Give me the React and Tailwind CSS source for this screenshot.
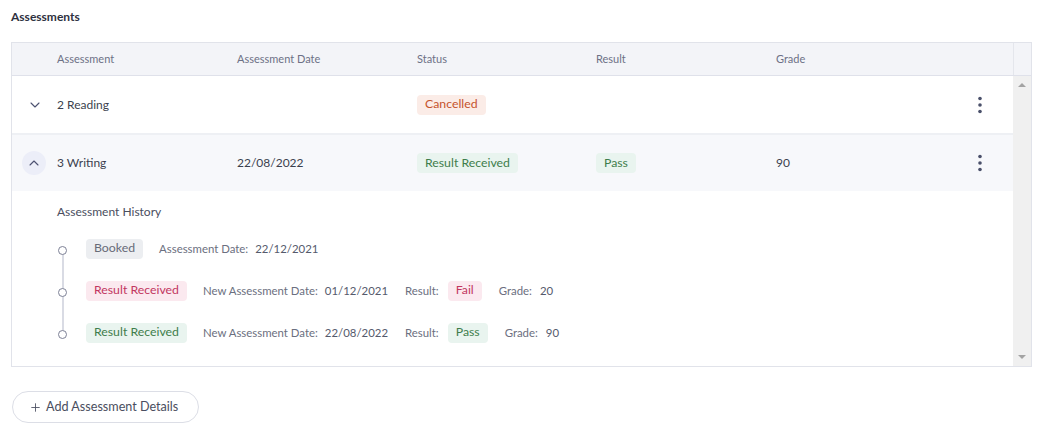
import { ChevronDown, ChevronUp, Plus } from 'lucide-react';

function Badge({ tone, children, className = '' }) {
  const tones = {
    red: 'bg-[#fbece7] text-[#c5532c]',
    green: 'bg-[#e9f4ef] text-[#3e7d4b]',
    pink: 'bg-[#fbe9ef] text-[#c2375f]',
    gray: 'bg-[#eceef1] text-[#676b78]',
  };
  return (
    <span className={`inline-flex items-center h-[20px] px-[8px] rounded-[4px] text-[12.3px] ${tones[tone]} ${className}`}>
      {children}
    </span>
  );
}

function Kebab() {
  return (
    <svg width="6" height="18" viewBox="0 0 6 18" className="text-[#4a506a]">
      <circle cx="3" cy="2.5" r="1.8" fill="currentColor" />
      <circle cx="3" cy="9" r="1.8" fill="currentColor" />
      <circle cx="3" cy="15.5" r="1.8" fill="currentColor" />
    </svg>
  );
}

function Dot() {
  return <span className="block w-[9px] h-[9px] rounded-full border-[1.5px] border-[#7d8196] bg-white" />;
}

function Label({ children }) {
  return <span className="text-[#6b6f80]">{children}</span>;
}

const history = [
  {
    badge: <Badge tone="gray">Booked</Badge>,
    body: (
      <>
        <Label>Assessment Date:</Label>
        <span className="ml-[7px] text-[#555a6c]">22/12/2021</span>
      </>
    ),
  },
  {
    badge: <Badge tone="pink">Result Received</Badge>,
    body: (
      <>
        <Label>New Assessment Date:</Label>
        <span className="ml-[7px] text-[#555a6c]">01/12/2021</span>
        <span className="ml-[17px]"><Label>Result:</Label></span>
        <Badge tone="pink" className="ml-[9px]">Fail</Badge>
        <span className="ml-[17px]"><Label>Grade:</Label></span>
        <span className="ml-[8px] text-[#555a6c]">20</span>
      </>
    ),
  },
  {
    badge: <Badge tone="green">Result Received</Badge>,
    body: (
      <>
        <Label>New Assessment Date:</Label>
        <span className="ml-[7px] text-[#555a6c]">22/08/2022</span>
        <span className="ml-[17px]"><Label>Result:</Label></span>
        <Badge tone="green" className="ml-[9px]">Pass</Badge>
        <span className="ml-[17px]"><Label>Grade:</Label></span>
        <span className="ml-[8px] text-[#555a6c]">90</span>
      </>
    ),
  },
];

export default function App() {
  return (
    <div className="w-[1043px] h-[433px] bg-white pl-[11px] pr-[11px] pt-[9px] font-['Lato',sans-serif] text-[#3b3f4e]">
      <h2 className="text-[12px] font-bold text-[#2e3140] leading-[16px]">Assessments</h2>

      {/* Table */}
      <div className="mt-[17px] w-[1021px] border border-[#e1e3ea] flex flex-col">
        {/* header */}
        <div className="flex h-[33px] bg-[#f3f4f8] border-b border-[#dfe1ea] text-[11px] text-[#6d7186]">
          <div className="flex-1 flex items-center pl-[45px]">
            <span className="w-[180px]">Assessment</span>
            <span className="w-[180px]">Assessment Date</span>
            <span className="w-[179px]">Status</span>
            <span className="w-[180px]">Result</span>
            <span className="w-[180px]">Grade</span>
          </div>
          <div className="w-[18px] border-l border-[#e4e6ec]" />
        </div>

        <div className="flex">
          <div className="flex-1 flex flex-col">
            {/* row 1 */}
            <div className="flex items-center h-[59px] bg-white border-b-2 border-[#eef0f4] text-[12px]">
              <div className="w-[45px] flex justify-center pl-[1px]">
                <ChevronDown size={16} strokeWidth={1.6} className="text-[#4c5170]" />
              </div>
              <span className="w-[180px]">2 Reading</span>
              <span className="w-[180px]" />
              <span className="w-[179px]"><Badge tone="red">Cancelled</Badge></span>
              <span className="w-[180px]" />
              <span className="w-[180px]" />
              <span className="ml-[21px]"><Kebab /></span>
            </div>

            {/* row 2 */}
            <div className="flex items-center h-[56px] bg-[#f7f8fb] text-[12px]">
              <div className="w-[45px] flex justify-center">
                <span className="w-[24px] h-[24px] -ml-[1px] rounded-full bg-[#eceef8] flex items-center justify-center">
                  <ChevronUp size={16} strokeWidth={1.6} className="text-[#4c5170]" />
                </span>
              </div>
              <span className="w-[180px]">3 Writing</span>
              <span className="w-[180px]">22/08/2022</span>
              <span className="w-[179px]"><Badge tone="green">Result Received</Badge></span>
              <span className="w-[180px]"><Badge tone="green">Pass</Badge></span>
              <span className="w-[180px]">90</span>
              <span className="ml-[21px]"><Kebab /></span>
            </div>

            {/* expanded history */}
            <div className="bg-white pl-[45px] pt-[13px] h-[175px] text-[11.4px]">
              <div className="text-[12px] text-[#4a4e5e] leading-[16px]">Assessment History</div>
              <div className="mt-[19px] relative">
                <span className="absolute left-[5px] top-[10px] h-[84px] w-[1.5px] bg-[#d9dbe4]" />
                {history.map((h, i) => (
                  <div key={i} className="flex items-center h-[19px] mb-[23px] relative">
                    <span className="w-[29px] flex items-start pl-[1px] translate-y-[2px]"><Dot /></span>
                    {h.badge}
                    <span className="ml-[16px] flex items-center">{h.body}</span>
                  </div>
                ))}
              </div>
            </div>
          </div>

          {/* scrollbar */}
          <div className="w-[18px] bg-[#f0f0f0] flex flex-col items-center justify-between py-[7px]">
            <span className="w-0 h-0 border-l-[4px] border-r-[4px] border-b-[4px] border-l-transparent border-r-transparent border-b-[#a3a3a3]" />
            <span className="w-0 h-0 border-l-[4px] border-r-[4px] border-t-[4px] border-l-transparent border-r-transparent border-t-[#a3a3a3]" />
          </div>
        </div>
      </div>

      <button className="mt-[24px] ml-[1px] h-[32px] pl-[16px] pr-[20px] rounded-full border border-[#dcdee6] bg-white flex items-center gap-[4px] text-[12.6px] text-[#4a4e60]">
        <Plus size={13} strokeWidth={1.6} />
        <span>Add Assessment Details</span>
      </button>
    </div>
  );
}
